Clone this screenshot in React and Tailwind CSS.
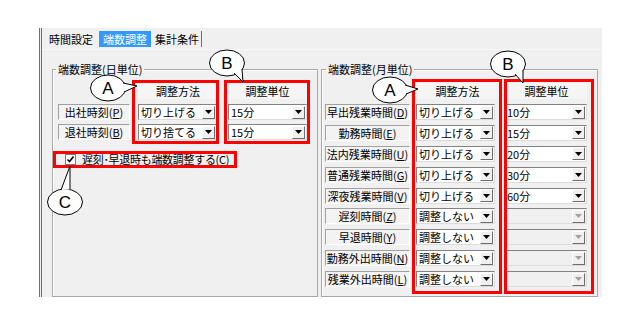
import React from 'react';

const dailyRows = [
  { label: '出社時刻', key: 'P', method: '切り上げる', unit: '15分' },
  { label: '退社時刻', key: 'B', method: '切り捨てる', unit: '15分' },
];

const monthlyRows = [
  { label: '早出残業時間', key: 'D', method: '切り上げる', unit: '10分' },
  { label: '勤務時間', key: 'E', method: '切り上げる', unit: '15分' },
  { label: '法内残業時間', key: 'U', method: '切り上げる', unit: '20分' },
  { label: '普通残業時間', key: 'G', method: '切り上げる', unit: '30分' },
  { label: '深夜残業時間', key: 'V', method: '切り上げる', unit: '60分' },
  { label: '遅刻時間', key: 'Z', method: '調整しない', unit: null },
  { label: '早退時間', key: 'Y', method: '調整しない', unit: null },
  { label: '勤務外出時間', key: 'N', method: '調整しない', unit: null },
  { label: '残業外出時間', key: 'L', method: '調整しない', unit: null },
];

function Label({ text, k, width }) {
  return (
    <div
      className={`${width} h-[16px] flex items-center justify-center border border-[#a0a0a0] border-r-white border-b-white bg-[#f3f3f3] whitespace-nowrap`}
    >
      {text}(<span className="underline">{k}</span>)
    </div>
  );
}

function Combo({ value, width, disabled }) {
  return (
    <div
      className={`${width} h-[16px] flex items-center border border-[#828282] border-r-[#dcdcdc] border-b-[#dcdcdc] ${
        disabled ? 'bg-[#f0f0f0]' : 'bg-white'
      }`}
    >
      <span className="flex-1 pl-[2px] whitespace-nowrap overflow-hidden">{value}</span>
      <span className="w-[13px] h-[13px] mr-[1px] flex items-center justify-center bg-[#f0f0f0] border border-white border-r-[#6d6d6d] border-b-[#6d6d6d]">
        <svg width="7" height="4" viewBox="0 0 7 4">
          <path d="M0 0h7L3.5 4z" fill={disabled ? '#a0a0a0' : '#000'} />
        </svg>
      </span>
    </div>
  );
}

function Callout({ cx, cy, letter, base, tip }) {
  return (
    <g>
      <ellipse cx={cx} cy={cy} rx="17.5" ry="13" fill="#fff" stroke="#000" strokeWidth="1" />
      <path d={`M${base[0][0]} ${base[0][1]} L${tip[0]} ${tip[1]} L${base[1][0]} ${base[1][1]}`} fill="#fff" stroke="#000" strokeWidth="1" />
      <text x={cx} y={cy + 6} textAnchor="middle" fontSize="17" fontFamily="Liberation Sans, Arial, sans-serif">
        {letter}
      </text>
    </g>
  );
}

export default function App() {
  return (
    <div className="relative w-[642px] h-[331px] bg-white overflow-hidden text-[11px] leading-[16px] text-black font-[family-name:'Noto_Sans_CJK_JP','Noto_Sans',sans-serif]">
      <div className="ml-[39px] mt-[28px] w-[563px] h-[269px] bg-[#f0f0f0] border-l-[3px] border-double border-[#6e6e6e] flex flex-col">
        {/* tabs */}
        <div className="h-[22px] flex items-center pl-[6px] border-b border-dotted border-white">
          <span className="px-[1px]">時間設定</span>
          <span className="ml-[5px] px-[4px] bg-[#3399ff] text-white">端数調整</span>
          <span className="ml-[4px] pr-[2px] border-r border-[#6e6e6e]">集計条件</span>
        </div>

        <div className="flex pl-[10px] pt-[11px] gap-[3px]">
          {/* daily */}
          <fieldset className="w-[266px] h-[236px] border border-[#a8a8a8] shadow-[inset_1px_1px_0_#fff]">
            <legend className="ml-[3px] px-[2px]">端数調整(日単位)</legend>
            <div className="flex mt-[6px] h-[16px]">
              <div className="w-[72px] ml-[5px]" />
              <div className="w-[80px] ml-[8px] text-center bg-[#f5f5f5]">調整方法</div>
              <div className="w-[79px] ml-[10px] text-center bg-[#f5f5f5]">調整単位</div>
            </div>
            <div className="flex flex-col gap-[4px] mt-[5px]">
              {dailyRows.map((r) => (
                <div key={r.key} className="flex">
                  <div className="ml-[5px]">
                    <Label text={r.label} k={r.key} width="w-[72px]" />
                  </div>
                  <div className="ml-[8px]">
                    <Combo value={r.method} width="w-[79px]" />
                  </div>
                  <div className="ml-[11px]">
                    <Combo value={r.unit} width="w-[79px]" />
                  </div>
                </div>
              ))}
            </div>
            <div className="flex items-center mt-[12px] ml-[12px] h-[14px]">
              <span className="w-[11px] h-[11px] flex items-center justify-center bg-white border border-[#7a7a7a]">
                <svg width="9" height="9" viewBox="0 0 9 9">
                  <path d="M1.5 4.5l2 2 4-5" fill="none" stroke="#000" strokeWidth="1.6" />
                </svg>
              </span>
              <span className="ml-[6px] tracking-[-0.3px]">
                遅刻･早退時も端数調整する(<span className="underline">C</span>)
              </span>
            </div>
          </fieldset>

          {/* monthly */}
          <fieldset className="w-[277px] h-[236px] border border-[#a8a8a8] shadow-[inset_1px_1px_0_#fff]">
            <legend className="ml-[4px] px-[2px]">端数調整(月単位)</legend>
            <div className="flex mt-[6px] h-[16px]">
              <div className="w-[85px] ml-[3px]" />
              <div className="w-[85px] ml-[5px] text-center bg-[#f5f5f5]">調整方法</div>
              <div className="w-[81px] ml-[6px] text-center bg-[#f5f5f5]">調整単位</div>
            </div>
            <div className="flex flex-col gap-[4.9px] mt-[5px]">
              {monthlyRows.map((r) => (
                <div key={r.key} className="flex">
                  <div className="ml-[3px]">
                    <Label text={r.label} k={r.key} width="w-[85px]" />
                  </div>
                  <div className="ml-[6px]">
                    <Combo value={r.method} width="w-[79px]" />
                  </div>
                  <div className="ml-[9px]">
                    <Combo value={r.unit || ''} width="w-[83px]" disabled={!r.unit} />
                  </div>
                </div>
              ))}
            </div>
          </fieldset>
        </div>
      </div>

      {/* annotation overlay */}
      <svg className="absolute inset-0 pointer-events-none" width="642" height="331" viewBox="0 0 642 331">
        <g fill="none" stroke="#ff0000" strokeWidth="3">
          <rect x="133.5" y="81.5" width="84" height="61" />
          <rect x="225.5" y="81.5" width="83" height="61" />
          <rect x="54.5" y="152.5" width="181" height="14" />
          <rect x="413.5" y="80.5" width="87" height="212" />
          <rect x="505.5" y="80.5" width="87" height="212" />
        </g>
        <Callout cx={108} cy={88} letter="A" base={[[123, 83], [124, 92]]} tip={[137, 86]} />
        <Callout cx={227} cy={63} letter="B" base={[[234, 73], [242, 69]]} tip={[243, 82]} />
        <Callout cx={390} cy={90} letter="A" base={[[405, 85], [406, 94]]} tip={[418, 89]} />
        <Callout cx={508} cy={64} letter="B" base={[[515, 74], [523, 70]]} tip={[523, 83]} />
        <Callout cx={65} cy={202} letter="C" base={[[61, 190], [70, 189.5]]} tip={[70, 166]} />
      </svg>
    </div>
  );
}
